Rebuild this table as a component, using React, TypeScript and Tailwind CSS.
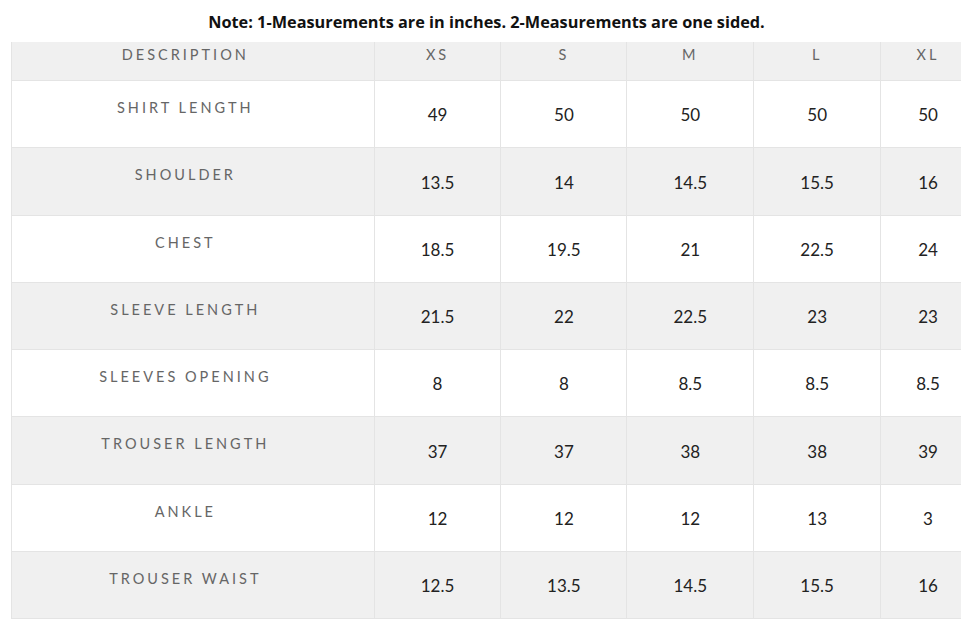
import React from "react";

const sizes = ["XS", "S", "M", "L", "XL"];
const rows: [string, string[], number][] = [
  ["SHIRT LENGTH", ["49", "50", "50", "50", "50"], 67],
  ["SHOULDER", ["13.5", "14", "14.5", "15.5", "16"], 68],
  ["CHEST", ["18.5", "19.5", "21", "22.5", "24"], 67],
  ["SLEEVE LENGTH", ["21.5", "22", "22.5", "23", "23"], 67],
  ["SLEEVES OPENING", ["8", "8", "8.5", "8.5", "8.5"], 67],
  ["TROUSER LENGTH", ["37", "37", "38", "38", "39"], 68],
  ["ANKLE", ["12", "12", "12", "13", "3"], 67],
  ["TROUSER WAIST", ["12.5", "13.5", "14.5", "15.5", "16"], 67],
];

const widths = ["w-[363px]", "w-[127px]", "w-[126px]", "w-[127px]", "w-[127px]", "w-[80px]"];

export default function App() {
  return (
    <div className="w-[967px] h-[633px] bg-white font-['Lato','Noto_Sans',sans-serif]">
      <div className="pt-[11px] pl-[6px] h-[42px] text-center text-[16.3px] leading-[22px] font-bold text-[#111] font-['Open_Sans',sans-serif]">
        Note: 1-Measurements are in inches. 2-Measurements are one sided.
      </div>
      <div className="ml-[11px] w-[950px] border-l border-[#e4e4e4] flex flex-col">
        <div className="flex h-[39px] bg-[#f0f0f0] border-b border-[#e4e4e4]">
          <div className={`${widths[0]} border-r border-[#e4e4e4] text-center pr-[15px] pt-[3px] text-[14.5px] leading-[20px] tracking-[3px] text-[#666]`}>
            DESCRIPTION
          </div>
          {sizes.map((s, i) => (
            <div
              key={s}
              className={`${widths[i + 1]} ${i < 4 ? "border-r border-[#e4e4e4]" : "pl-[14px]"} text-center pt-[3px] text-[14.5px] leading-[20px] tracking-[3px] text-[#666]`}
            >
              {s}
            </div>
          ))}
        </div>
        {rows.map(([name, vals, h], r) => (
          <div
            key={name}
            className={`flex border-b border-[#e4e4e4] ${r % 2 === 1 ? "bg-[#f0f0f0]" : "bg-white"}`}
            style={{ height: h }}
          >
            <div className={`${widths[0]} border-r border-[#e4e4e4] text-center pr-[15px] pt-[17px] text-[14.5px] leading-[20px] tracking-[3px] text-[#666]`}>
              {name}
            </div>
            {vals.map((v, i) => (
              <div
                key={i}
                className={`${widths[i + 1]} ${i < 4 ? "border-r border-[#e4e4e4]" : "pl-[14px]"} flex items-center justify-center pt-[2px] text-[17px] text-[#222]`}
              >
                {v}
              </div>
            ))}
          </div>
        ))}
      </div>
    </div>
  );
}
